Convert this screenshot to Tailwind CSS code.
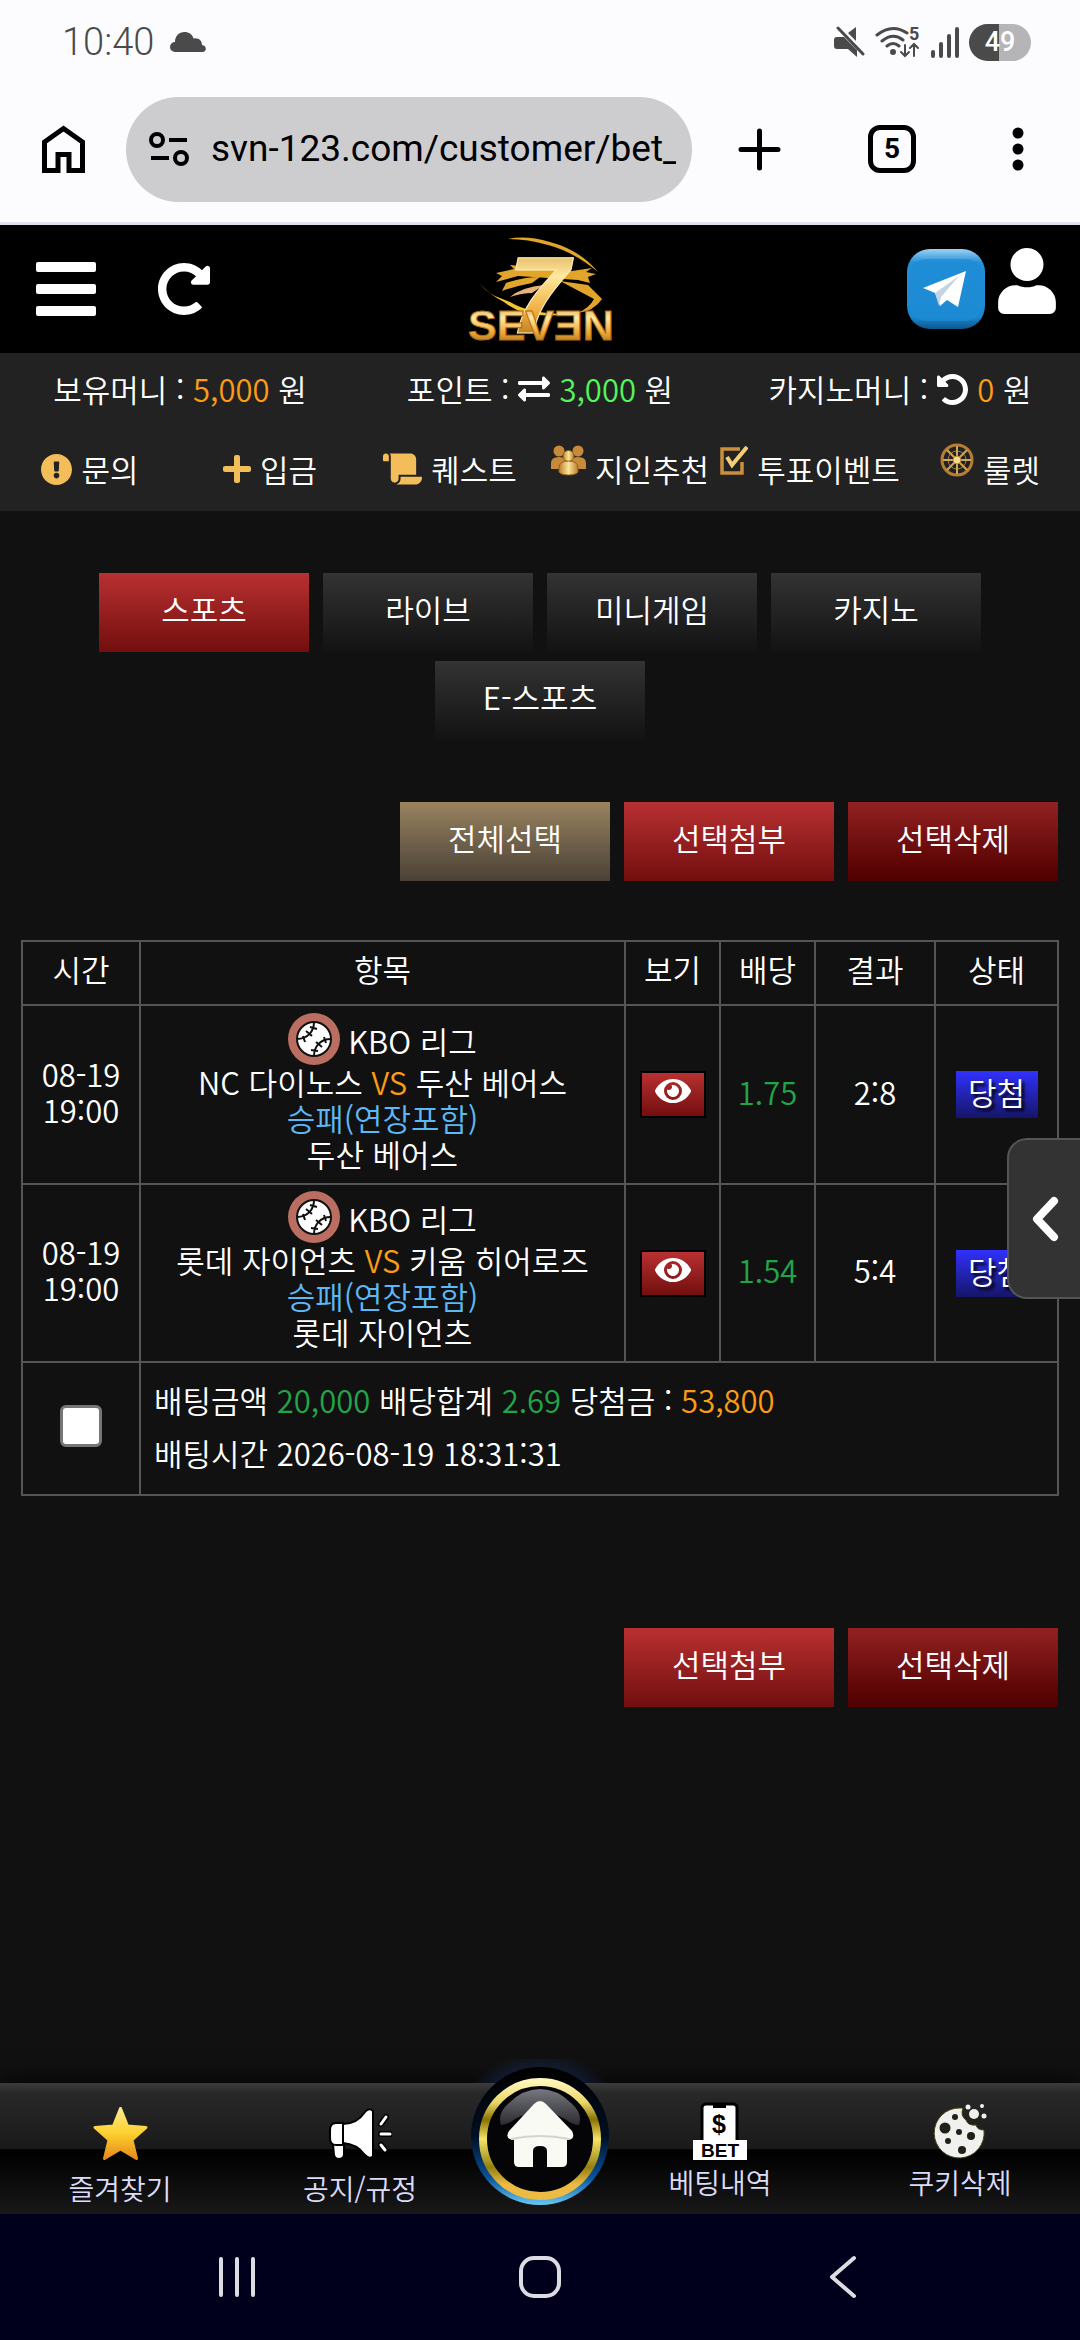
<!DOCTYPE html>
<html lang="ko">
<head>
  <meta charset="utf-8" />
  <meta name="viewport" content="width=device-width, initial-scale=1" />
  <title>SEVEN - 배팅내역</title>
  <script src="https://cdn.jsdelivr.net/npm/@tailwindcss/browser@4"></script>
</head>
<body class="bg-[#111] text-white font-['Noto_Sans_CJK_KR',sans-serif] font-[350] text-[31px] leading-9">

  <!-- shared icons -->
  <svg class="absolute w-0 h-0">
    <defs>
      <linearGradient id="gold" x1="0" y1="0" x2="0" y2="1">
        <stop offset="0" stop-color="#c98a2b" />
        <stop offset=".35" stop-color="#ffe9a0" />
        <stop offset=".65" stop-color="#f0a93a" />
        <stop offset="1" stop-color="#8a5a10" />
      </linearGradient>
      <linearGradient id="gold-side" x1="0" y1="0" x2="1" y2="0">
        <stop offset="0" stop-color="#c07c28" />
        <stop offset=".5" stop-color="#fbe59a" />
        <stop offset="1" stop-color="#c07c28" />
      </linearGradient>
      <symbol id="eye" viewBox="0 64 576 384">
        <path d="M572.52 241.4C518.29 135.59 410.93 64 288 64S57.68 135.64 3.48 241.41a32.35 32.35 0 0 0 0 29.19C57.71 376.41 165.07 448 288 448s230.32-71.64 284.52-177.41a32.35 32.35 0 0 0 0-29.19zM288 400a144 144 0 1 1 144-144 143.93 143.93 0 0 1-144 144zm0-240a95.31 95.31 0 0 0-25.31 3.79 47.85 47.85 0 0 1-66.9 66.9A95.78 95.78 0 1 0 288 160z" />
      </symbol>
      <symbol id="redo" viewBox="8 8 496 496">
        <path d="M256.455 8c66.269.119 126.437 26.233 170.859 68.685l35.715-35.715C478.149 25.851 504 36.559 504 57.941V192c0 13.255-10.745 24-24 24H345.941c-21.382 0-32.09-25.851-16.971-40.971l41.75-41.75c-30.864-28.899-70.801-44.907-113.23-45.273-92.398-.798-170.283 73.977-169.484 169.442C88.764 348.009 162.184 424 256 424c41.127 0 79.997-14.678 110.629-41.556 4.743-4.161 11.906-3.908 16.368.553l39.662 39.662c4.872 4.872 4.631 12.815-.482 17.433C378.202 479.813 319.926 504 256 504 119.034 504 8.001 392.967 8 256.002 7.999 119.193 119.646 7.755 256.455 8z" />
      </symbol>
      <symbol id="ball" viewBox="0 0 52 52">
        <circle cx="26" cy="26" r="26" fill="#ba6d61" />
        <circle cx="26" cy="26" r="17" fill="#fff" stroke="#111" stroke-width="2" />
        <g fill="none" stroke="#111" stroke-width="2">
          <path d="M26 9c0 9-6 17-17 17M26 43c0-9 6-17 17-17" />
          <path d="M22 14l7 2M18 18l6 5M15 23l2 6M23 37l7 1M28 29l6 5M36 24l2 6" />
        </g>
      </symbol>
    </defs>
  </svg>

  <div class="min-h-screen flex flex-col relative">

    <!-- Phone status bar + browser bar -->
    <div class="bg-[#fcfcff] border-b-[3px] border-[#e1e0ec] text-black font-['Roboto',sans-serif]">
      <div class="flex items-center justify-between h-20 pt-1 pl-[62px] pr-[49px] text-[#4a4a4a]">
        <div class="flex items-center gap-4">
          <span class="text-[38px] leading-10 font-light">10:40</span>
          <svg class="w-9 h-5" viewBox="0 0 36 20" fill="currentColor"><path d="M5 20a5 5 0 0 1 0-10C5 4 9 0 14.500 0c4.500 0 8 2.500 9 6.500 5-1 8.500 2 8.500 6.500 5 .5 5 7 .5 7z" /></svg>
        </div>
        <div class="flex items-center gap-[9px]">
          <svg class="w-8 h-8" viewBox="0 0 32 32" fill="currentColor">
            <path d="M0 14q0-3 3-3h7l13 13v7l-9-8H3q-3 0-3-3zM14 7l8-6v14z" />
            <path d="M4 2l25 26" stroke="#4a4a4a" stroke-width="3" stroke-linecap="round" />
          </svg>
          <svg class="w-[46px] h-8" viewBox="0 0 46 32" fill="none" stroke="#4a4a4a" stroke-width="3" stroke-linecap="round">
            <path d="M2 9Q17-3 32 7M7 15q11-9 21-1M12 20q6-5 12 0" />
            <circle cx="18" cy="26" r="2" fill="#4a4a4a" stroke-width="2" />
            <path d="M30 19v11M26 26l4 4 4-4M39 30V18M35 22l4-4 4 4" stroke-width="2" />
            <text x="34" y="14" font-size="18" font-weight="700" fill="#4a4a4a" stroke="none">5</text>
          </svg>
          <svg class="w-[30px] h-8" viewBox="0 0 30 32" stroke="#4a4a4a" stroke-width="4" stroke-linecap="round"><path d="M3 26v4M11 18v12M19 10v20M27 3v27" /></svg>
          <span class="flex items-center justify-center w-[62px] h-[37px] rounded-full bg-linear-to-r from-[#4a4a4a] from-48% to-[#b5b5b7] to-48% text-white text-[27px] font-medium">49</span>
        </div>
      </div>
      <div class="flex items-center h-[142px] pt-[2px] pb-[6px] pl-[42px] pr-[52px]">
        <button class="shrink-0" aria-label="홈">
          <svg class="w-[43px] h-12" viewBox="0 0 43 48" fill="none" stroke="#000" stroke-width="5"><path d="M2.500 45.500V17L21.500 3.500 40.500 17v28.500H27V29.500H16v16z" /></svg>
        </button>
        <label class="flex items-center gap-[22px] flex-1 min-w-0 h-[105px] rounded-full bg-[#cdcdcf] ml-[41px] pl-[23px] pr-4">
          <svg class="w-10 h-[34px] shrink-0" viewBox="0 0 40 34" fill="none" stroke="#000" stroke-width="4"><circle cx="8" cy="8" r="6" /><circle cx="32" cy="26" r="6" /><path d="M20 8h18M2 26h18" /></svg>
          <input type="text" aria-label="주소" value="svn-123.com/customer/bet_" class="w-full min-w-0 bg-transparent text-[37px] leading-[48px] font-normal outline-none" />
        </label>
        <button class="shrink-0 ml-[46px]" aria-label="새 탭">
          <svg class="w-[43px] h-[43px]" viewBox="0 0 43 43" stroke="#000" stroke-width="5" stroke-linecap="round"><path d="M21.500 3v37M3 21.500h37" /></svg>
        </button>
        <button class="shrink-0 ml-[87px] w-12 h-12 rounded-xl border-[5px] border-black text-[28px] leading-9 font-bold" aria-label="탭 목록">5</button>
        <button class="shrink-0 ml-[92px]" aria-label="메뉴">
          <svg class="w-5 h-11" viewBox="0 0 20 44"><circle cx="10" cy="6" r="5.500" /><circle cx="10" cy="22" r="5.500" /><circle cx="10" cy="38" r="5.500" /></svg>
        </button>
      </div>
    </div>

    <!-- Header -->
    <header class="bg-black h-32 grid grid-cols-3 items-center pl-9 pr-6">
      <div class="flex items-center gap-[62px]">
        <button aria-label="메뉴 열기">
          <svg class="w-[60px] h-[54px]" viewBox="0 0 60 54" fill="#fff"><rect width="60" height="10" rx="2" /><rect y="22" width="60" height="10" rx="2" /><rect y="44" width="60" height="10" rx="2" /></svg>
        </button>
        <button aria-label="새로고침"><svg class="w-[52px] h-[52px] fill-white"><use href="#redo" /></svg></button>
      </div>
      <a href="#" class="justify-self-center ml-[-12px]">
        <svg class="w-40 h-[120px]" viewBox="0 0 160 120" font-family="Liberation Sans" font-weight="700">
          <g fill="#e0a52a">
            <path d="M48 10q18-4 42 3 30 8 48 30-24-20-50-27-20-6-40-6z" />
            <path d="M36 44l18-4-4-4 62 6 20-3-6 4 10 2-8 3 2 6-12-3-60-4-22 6 6-6z" />
            <path d="M46 54q18-6 34-6l-8 6q-16 3-30 8zM100 52l28 4-6-6 20 20q-8 12-24 14 12-6 16-14z" />
            <path d="M20 55q8 10 20 14l10 4q20 12 56 12-40 6-62-12-14-7-24-18z" fill="#f3c52f" />
            <path d="M50 68q12-10 34-12l-12 8q-10 0-22 4z" fill="#e9b27a" />
          </g>
          <text x="48" y="104" font-size="110" font-style="italic" fill="url(#gold)" stroke="#fff0bd" stroke-width="1">7</text>
          <text x="8" y="111" font-size="43" fill="url(#gold)" stroke="#b06a14" stroke-width="1">SEVƎN</text>
        </svg>
      </a>
      <div class="flex items-center justify-end gap-[13px]">
        <a href="#" aria-label="텔레그램">
          <svg class="w-[78px] h-20" viewBox="0 0 78 80">
            <defs>
              <linearGradient id="tg" x1="0" y1="0" x2="0" y2="1"><stop offset="0" stop-color="#9fd2f3" /><stop offset=".17" stop-color="#2390d8" /><stop offset=".85" stop-color="#1c87cf" /><stop offset="1" stop-color="#0c568c" /></linearGradient>
            </defs>
            <rect width="78" height="80" rx="23" fill="url(#tg)" />
            <rect x="2" y="10" width="74" height="62" rx="18" fill="#1e8cd6" opacity=".7" />
            <path d="M16 39l43-17-8 36-11-7-7 6-5-13z" fill="#fff" />
            <path d="M28 44l24-17-18 21-2 9z" fill="#c3d4e4" />
          </svg>
        </a>
        <a href="#" aria-label="내 정보" class="pb-4">
          <svg class="w-[58px] h-[66px]" viewBox="0 0 448 512" fill="#fff"><path d="M224 256c70.700 0 128-57.300 128-128S294.700 0 224 0 96 57.300 96 128s57.300 128 128 128zm89.600 32h-16.700c-22.200 10.200-46.900 16-72.900 16s-50.600-5.800-72.900-16h-16.700C60.200 288 0 348.200 0 422.400V464c0 26.500 21.500 48 48 48h352c26.500 0 48-21.500 48-48v-41.600c0-74.200-60.200-134.400-134.400-134.400z" /></svg>
        </a>
      </div>
    </header>

    <!-- Balance + quick menu -->
    <section class="bg-[#222] h-[158px] pt-[18px]">
      <div class="grid grid-cols-3 h-9 whitespace-nowrap">
        <div class="text-center">보유머니 : <span class="text-[#fb9b16]">5,000</span> 원</div>
        <div class="flex items-center justify-center gap-[9px]">
          <span>포인트 :</span>
          <svg class="w-8 h-8" viewBox="0 0 512 512" fill="#fff"><path d="M0 168v-16c0-13.255 10.745-24 24-24h360V80c0-21.367 25.899-32.042 40.971-16.971l80 80c9.372 9.373 9.372 24.569 0 33.941l-80 80C409.956 271.982 384 261.456 384 240v-48H24c-13.255 0-24-10.745-24-24zm488 152H128v-48c0-21.314-25.862-32.080-40.971-16.971l-80 80c-9.372 9.373-9.372 24.569 0 33.941l80 80C102.057 463.997 128 453.437 128 432v-48h360c13.255 0 24-10.745 24-24v-16c0-13.255-10.745-24-24-24z" /></svg>
          <span><span class="text-[#54f45c]">3,000</span> 원</span>
        </div>
        <div class="flex items-center justify-center gap-[9px]">
          <span>카지노머니 :</span>
          <svg class="w-[31px] h-[31px] fill-white -scale-x-100"><use href="#redo" /></svg>
          <span><span class="text-[#fb9b16]">0</span> 원</span>
        </div>
      </div>
      <nav class="grid grid-cols-6 mt-9 whitespace-nowrap">
        <a href="#" class="flex items-center justify-center gap-[9px]">
          <svg class="w-[31px] h-[31px]" viewBox="8 8 496 496" fill="#f3bd5a"><path d="M504 256c0 136.997-111.043 248-248 248S8 392.997 8 256C8 119.083 119.043 8 256 8s248 111.083 248 248zm-248 50c-25.405 0-46 20.595-46 46s20.595 46 46 46 46-20.595 46-46-20.595-46-46-46zm-43.673-165.346l7.418 136c.347 6.364 5.609 11.346 11.982 11.346h48.546c6.373 0 11.635-4.982 11.982-11.346l7.418-136c.375-6.874-5.098-12.654-11.982-12.654h-63.383c-6.884 0-12.356 5.780-11.981 12.654z" /></svg>
          문의
        </a>
        <a href="#" class="flex items-center justify-center gap-[9px]">
          <svg class="w-7 h-8" viewBox="0 0 448 512" fill="#f3bd5a"><path d="M416 208H272V64c0-17.670-14.330-32-32-32h-32c-17.670 0-32 14.330-32 32v144H32c-17.670 0-32 14.330-32 32v32c0 17.670 14.330 32 32 32h144v144c0 17.670 14.330 32 32 32h32c17.670 0 32-14.330 32-32V304h144c17.670 0 32-14.330 32-32v-32c0-17.670-14.330-32-32-32z" /></svg>
          입금
        </a>
        <a href="#" class="flex items-center justify-center gap-[9px]">
          <svg class="w-[39px] h-8" viewBox="0 0 640 512" fill="#f3bd5a"><path d="M48 0C21.530 0 0 21.530 0 48v64c0 8.840 7.160 16 16 16h80V48C96 21.530 74.470 0 48 0zm208 412.570V352h288V96c0-52.940-43.060-96-96-96H111.590C121.740 13.410 128 29.920 128 48v368c0 38.870 34.650 69.650 74.750 63.120C234.220 474 256 444.460 256 412.570zM288 384v32c0 52.930-43.060 96-96 96h336c61.860 0 112-50.140 112-112 0-8.840-7.160-16-16-16H288z" /></svg>
          퀘스트
        </a>
        <a href="#" class="flex items-center justify-center gap-[9px]">
          <svg class="w-[35px] h-[31px] mb-[18px]" viewBox="0 0 35 31">
            <g fill="#c78a3a"><circle cx="8" cy="6" r="5.500" /><circle cx="27" cy="6" r="5.500" /><path d="M0 24v-6q0-6 8-6t8 6v6zM19 24v-6q0-6 8-6t8 6v6z" /></g>
            <g fill="url(#gold-side)" stroke="#8b6420" stroke-width="1"><circle cx="17.500" cy="11" r="5.500" /><path d="M8 27v-4q0-7 9.500-7t9.500 7v4q-2 3-9.500 3T8 27z" /></g>
          </svg>
          지인추천
        </a>
        <a href="#" class="flex items-center justify-center gap-[9px]">
          <svg class="w-7 h-8 mb-[18px]" viewBox="0 0 28 32" fill="none">
            <path d="M20 5H2v24h20V18" stroke="#c98f3b" stroke-width="3.500" />
            <path d="M7 13l5 8L27 3" stroke="#f1cf74" stroke-width="4" />
          </svg>
          투표이벤트
        </a>
        <a href="#" class="flex items-center justify-center gap-[9px]">
          <svg class="w-[34px] h-[34px] mb-[18px]" viewBox="0 0 34 34" fill="none" stroke="#b57e33">
            <circle cx="17" cy="17" r="15" stroke-width="3" />
            <circle cx="17" cy="17" r="9" stroke-width="1" />
            <path d="M17 3v28M3 17h28M7 7l20 20M27 7L7 27" stroke="#cfa75a" stroke-width="2" />
            <circle cx="17" cy="17" r="4" fill="#f3dc8c" stroke-width="1" />
          </svg>
          룰렛
        </a>
      </nav>
    </section>

    <!-- Category tabs -->
    <nav class="flex flex-wrap justify-center gap-x-[14px] gap-y-[9px] px-[90px] mt-[62px]">
      <button class="w-[210px] h-[79px] pb-2 bg-linear-to-b from-[#b93031] to-[#730e0e]">스포츠</button>
      <button class="w-[210px] h-[79px] pb-2 bg-linear-to-b from-[#333] to-[#131313]">라이브</button>
      <button class="w-[210px] h-[79px] pb-2 bg-linear-to-b from-[#333] to-[#131313]">미니게임</button>
      <button class="w-[210px] h-[79px] pb-2 bg-linear-to-b from-[#333] to-[#131313]">카지노</button>
      <button class="w-[210px] h-[79px] pb-2 bg-linear-to-b from-[#333] to-[#131313]">E-스포츠</button>
    </nav>

    <div class="flex justify-end gap-[14px] pr-[22px] mt-[62px]">
      <button class="w-[210px] h-[79px] pb-2 bg-linear-to-b from-[#9a8460] to-[#4a4136]">전체선택</button>
      <button class="w-[210px] h-[79px] pb-2 bg-linear-to-b from-[#b93031] to-[#730e0e]">선택첨부</button>
      <button class="w-[210px] h-[79px] pb-2 bg-linear-to-b from-[#932122] to-[#4f0000]">선택삭제</button>
    </div>

    <!-- Bet history -->
    <div class="px-[21px] mt-[59px]">
      <table class="w-full table-fixed border-collapse text-center [&_td]:border-2 [&_td]:border-[#555] [&_th]:border-2 [&_th]:border-[#555]">
        <colgroup>
          <col class="w-[118px]" />
          <col />
          <col class="w-[95px]" />
          <col class="w-[95px]" />
          <col class="w-[120px]" />
          <col class="w-[123px]" />
        </colgroup>
        <thead>
          <tr class="h-16 [&>th]:font-[350] [&>th]:pb-2">
            <th>시간</th>
            <th>항목</th>
            <th>보기</th>
            <th>배당</th>
            <th>결과</th>
            <th>상태</th>
          </tr>
        </thead>
        <tbody>
          <tr class="h-[179px]">
            <td class="pb-[6px]">08-19<br />19:00</td>
            <td class="pb-1">
              <div class="flex items-center justify-center gap-2 h-[50px]">
                <svg class="w-[52px] h-[52px]"><use href="#ball" /></svg>
                <span class="pt-1">KBO 리그</span>
              </div>
              <div>NC 다이노스 <span class="text-[#fb9b16]">VS</span> 두산 베어스</div>
              <div class="text-[#5db9f5]">승패(연장포함)</div>
              <div>두산 베어스</div>
            </td>
            <td>
              <button aria-label="보기" class="inline-flex justify-center pt-[6px] w-[66px] h-[47px] border-2 border-black bg-linear-to-b from-[#b93031] to-[#730e0e] align-middle"><svg class="w-9 h-6 fill-white"><use href="#eye" /></svg></button>
            </td>
            <td class="pb-[6px] text-[#22a549]">1.75</td>
            <td class="pb-[6px]">2:8</td>
            <td><span class="inline-block w-[82px] h-[47px] leading-[42px] bg-linear-to-b from-[#3131ff] to-[#15156a] text-shadow-[3px_3px_3px_#000] align-middle">당첨</span></td>
          </tr>
          <tr class="h-[178px]">
            <td class="pb-[6px]">08-19<br />19:00</td>
            <td class="pb-1">
              <div class="flex items-center justify-center gap-2 h-[50px]">
                <svg class="w-[52px] h-[52px]"><use href="#ball" /></svg>
                <span class="pt-1">KBO 리그</span>
              </div>
              <div>롯데 자이언츠 <span class="text-[#fb9b16]">VS</span> 키움 히어로즈</div>
              <div class="text-[#5db9f5]">승패(연장포함)</div>
              <div>롯데 자이언츠</div>
            </td>
            <td>
              <button aria-label="보기" class="inline-flex justify-center pt-[6px] w-[66px] h-[47px] border-2 border-black bg-linear-to-b from-[#b93031] to-[#730e0e] align-middle"><svg class="w-9 h-6 fill-white"><use href="#eye" /></svg></button>
            </td>
            <td class="pb-[6px] text-[#22a549]">1.54</td>
            <td class="pb-[6px]">5:4</td>
            <td><span class="inline-block w-[82px] h-[47px] leading-[42px] bg-linear-to-b from-[#3131ff] to-[#15156a] text-shadow-[3px_3px_3px_#000] align-middle">당첨</span></td>
          </tr>
          <tr class="h-[133px]">
            <td class="pb-[6px]"><input type="checkbox" aria-label="배팅 선택" class="appearance-none block mx-auto w-[42px] h-[42px] rounded-md border-[3px] border-[#767676] bg-white" /></td>
            <td colspan="5" class="text-left pl-[13px] pb-[6px] leading-[53px]">
              배팅금액 <span class="text-[#22a549]">20,000</span> 배당합계 <span class="text-[#22a549]">2.69</span> 당첨금 : <span class="text-[#fb9b16]">53,800</span><br />
              배팅시간 2026-08-19 18:31:31
            </td>
          </tr>
        </tbody>
      </table>
    </div>

    <div class="flex justify-end gap-[14px] pr-[22px] mt-[132px]">
      <button class="w-[210px] h-[79px] pb-2 bg-linear-to-b from-[#b93031] to-[#730e0e]">선택첨부</button>
      <button class="w-[210px] h-[79px] pb-2 bg-linear-to-b from-[#932122] to-[#4f0000]">선택삭제</button>
    </div>

    <!-- Slide-out handle -->
    <button class="absolute right-0 top-[1138px] w-[73px] h-[161px] rounded-l-[20px] border-2 border-r-0 border-[#555] bg-[#333] flex items-center justify-center" aria-label="사이드 열기">
      <svg class="w-7 h-[46px]" viewBox="0 0 28 46" fill="none" stroke="#fff" stroke-width="8" stroke-linejoin="round" stroke-linecap="round"><path d="M23 5L6 23l17 18" /></svg>
    </button>

    <!-- Bottom menu -->
    <nav class="mt-auto relative h-[131px] grid grid-cols-[2fr_2fr_1fr_2fr_2fr] text-[28px] text-[#dcdcfa] bg-[linear-gradient(#3c3c3c_0,#282828_8%,#1a1a1a_50%,#000_51%,#181818_100%)] shadow-[0_0_24px_#000]">
      <a href="#" class="flex flex-col items-center pt-6">
        <svg class="w-[55px] h-[53px]" viewBox="0 0 55 53">
          <defs><linearGradient id="star" x1="0" y1="0" x2="0" y2="1"><stop offset="0" stop-color="#ffe98a" /><stop offset=".5" stop-color="#fcd02e" /><stop offset="1" stop-color="#e88a1c" /></linearGradient></defs>
          <path d="M27.500 1.500l7 17.500 18.500 1.500-14 12.500 4.500 18.500-16-9.500-16 9.500 4.500-18.500-14-12.500 18.500-1.500z" fill="url(#star)" stroke="url(#star)" stroke-width="3" stroke-linejoin="round" />
        </svg>
        <span class="mt-[10px]">즐겨찾기</span>
      </a>
      <a href="#" class="flex flex-col items-center pt-6">
        <svg class="w-[64px] h-[53px]" viewBox="0 0 64 53" fill="#fff" stroke="#000" stroke-width="2">
          <path d="M5 37h11v11q-1 4-5 4t-5-4z" />
          <path d="M15 16v22H8q-6 0-6-7v-8q0-7 6-7z" />
          <path d="M15 17q14 0 22-12 4-5 8-1v45q-3 4-8-1-8-11-22-12z" />
          <path d="M53 17l5-7M53 27h9M53 38l4 5" stroke="#000" stroke-width="6" stroke-linecap="round" />
          <path d="M53 17l5-7M53 27h9M53 38l4 5" stroke="#fff" stroke-width="3" stroke-linecap="round" />
        </svg>
        <span class="mt-[10px]">공지/규정</span>
      </a>
      <a href="#" aria-label="홈으로" class="relative">
        <svg class="absolute -top-6 left-1/2 -translate-x-1/2 w-[200px] h-[156px]" viewBox="-20 0 200 156">
          <defs>
            <linearGradient id="ring" x1="0" y1="0" x2="0" y2="1"><stop offset="0" stop-color="#fff6b8" /><stop offset=".18" stop-color="#e9d766" /><stop offset=".33" stop-color="#8a7205" /><stop offset=".5" stop-color="#f6e468" /><stop offset=".75" stop-color="#94800f" /><stop offset=".9" stop-color="#edbb44" /></linearGradient>
            <linearGradient id="rim" x1="0" y1="0" x2="0" y2="1"><stop offset="0" stop-color="#000" /><stop offset=".5" stop-color="#010f22" /><stop offset=".8" stop-color="#09519c" /><stop offset="1" stop-color="#65c9f5" /></linearGradient>
            <radialGradient id="glow"><stop offset=".65" stop-color="#1b3a80" stop-opacity=".6" /><stop offset="1" stop-color="#1b3a80" stop-opacity="0" /></radialGradient>
            <linearGradient id="gloss" x1="0" y1="0" x2="0" y2="1"><stop offset="0" stop-color="#77777f" /><stop offset="1" stop-color="#2b2b30" /></linearGradient>
            <clipPath id="above-bar"><path d="M-20 0h200v24H-20z" /></clipPath>
          </defs>
          <circle cx="80" cy="88" r="95" fill="url(#glow)" clip-path="url(#above-bar)" />
          <circle cx="80" cy="77" r="69" fill="url(#rim)" />
          <circle cx="80" cy="80" r="57" fill="#050508" stroke="url(#ring)" stroke-width="8" />
          <path d="M41 66q-4-12 8-22 14-14 31-14t31 14q12 10 8 22-6 0-14-6-25-14-50 0-8 6-14 6z" fill="url(#gloss)" />
          <path d="M80 42q3 0 6 3l26 27q4 8-4 9h-1v22q0 5-5 5H87V92q0-5-7-5t-7 5v16H59q-5 0-5-5V81q-10-1-5-9l25-27q3-3 6-3z" fill="#fafaf4" />
          <path d="M51 80q29-6 58 0" stroke="#d4d4cc" fill="none" stroke-width="2" />
        </svg>
      </a>
      <a href="#" class="flex flex-col items-center pt-[18px]">
        <svg class="w-[58px] h-[59px]" viewBox="0 0 58 59" font-family="Liberation Sans" font-weight="700">
          <rect x="11" y="3" width="35" height="40" rx="4" fill="#fff" stroke="#000" stroke-width="3" />
          <path d="M22 3h13v4H22z" fill="#000" />
          <text x="28" y="32" font-size="25" text-anchor="middle">$</text>
          <path d="M2 39h54v20H2z" fill="#fff" />
          <text x="29" y="56" font-size="19" text-anchor="middle">BET</text>
        </svg>
        <span class="mt-1">베팅내역</span>
      </a>
      <a href="#" class="flex flex-col items-center pt-[18px]">
        <svg class="w-[58px] h-[59px]" viewBox="0 0 58 59">
          <path d="M29 7a25 25 0 1 0 24 22q-7 0-8-5-8 1-10-5-6-4-3-12z" fill="#f0f0ee" stroke="#4a4313" stroke-width="1" />
          <g fill="#f0f0ee"><circle cx="43" cy="13" r="5" /><circle cx="37" cy="6" r="2.500" /><circle cx="51" cy="5" r="2" /><circle cx="53" cy="15" r="2.500" /></g>
          <g fill="#222117"><circle cx="14" cy="27" r="5.500" /><circle cx="24" cy="16" r="3" /><circle cx="28" cy="31" r="3" /><circle cx="40" cy="35" r="4" /><circle cx="17" cy="40" r="3" /><circle cx="31" cy="49" r="4" /></g>
        </svg>
        <span class="mt-1">쿠키삭제</span>
      </a>
    </nav>

    <!-- Android navigation -->
    <div class="relative h-[126px] bg-[#00001c] grid grid-cols-3 items-center justify-items-center px-[85px]">
      <button aria-label="최근 앱"><svg class="w-10 h-[42px]" viewBox="0 0 40 42" stroke="#dcdce2" stroke-width="4" stroke-linecap="round"><path d="M4 3v36M20 3v36M36 3v36" /></svg></button>
      <button aria-label="홈 화면"><svg class="w-11 h-11" viewBox="0 0 44 44" fill="none" stroke="#dcdce2" stroke-width="4"><rect x="3" y="3" width="38" height="38" rx="13" /></svg></button>
      <button aria-label="뒤로"><svg class="w-7 h-11" viewBox="0 0 28 44" fill="none" stroke="#dcdce2" stroke-width="4" stroke-linecap="round" stroke-linejoin="round"><path d="M25 3L3 22l22 19" /></svg></button>
    </div>

  </div>
</body>
</html>
